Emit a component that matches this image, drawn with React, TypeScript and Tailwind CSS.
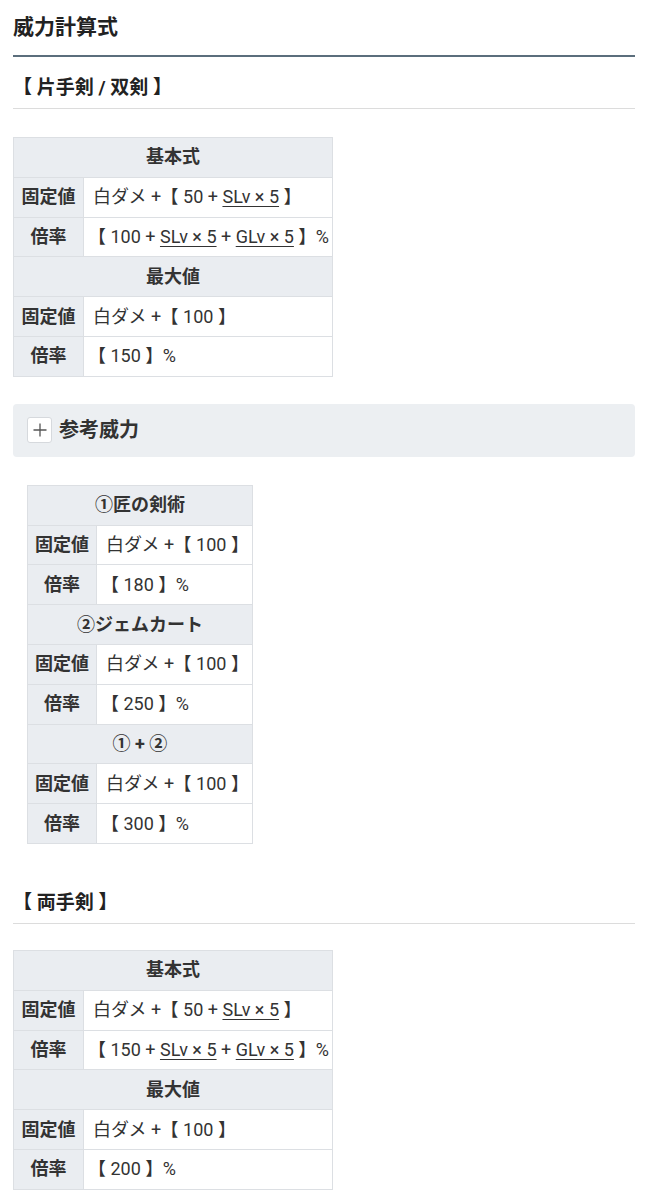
import React from "react";

const U = ({ children }: { children: React.ReactNode }) => (
  <span className="underline underline-offset-[3px] decoration-[1px]">{children}</span>
);
const L = () => <span className="ml-[4px]">【</span>;
const R = () => <span className="mr-[4px]">】</span>;

type Row =
  | { kind: "head"; text: React.ReactNode }
  | { kind: "row"; label: string; value: React.ReactNode };

function Table({ rows, width, labelW }: { rows: Row[]; width: string; labelW: string }) {
  return (
    <table className={`border-collapse ${width} text-[18px] text-[#333]`}>
      <tbody>
        {rows.map((r, i) =>
          r.kind === "head" ? (
            <tr key={i}>
              <td
                colSpan={2}
                className="h-[39.8px] border border-[#dcdfe3] bg-[#eaedf1] text-center font-bold p-0 leading-[24px]"
              >
                {r.text}
              </td>
            </tr>
          ) : (
            <tr key={i}>
              <td
                className={`h-[39.8px] ${labelW} border border-[#dcdfe3] bg-[#eaedf1] text-center font-bold p-0 leading-[24px]`}
              >
                {r.label}
              </td>
              <td className="h-[39.8px] border border-[#dcdfe3] bg-white pl-[9px] pr-0 py-0 whitespace-nowrap leading-[24px] [font-feature-settings:'halt']">
                {r.value}
              </td>
            </tr>
          )
        )}
      </tbody>
    </table>
  );
}

function SectionHead({ children, className = "" }: { children: React.ReactNode; className?: string }) {
  return (
    <div
      className={`border-b border-[#dcdcdc] pb-[7px] text-[19px] leading-[26px] font-bold text-[#222] ${className}`}
    >
      {children}
    </div>
  );
}

export default function App() {
  const font = { fontFamily: 'Roboto, "Noto Sans CJK JP", sans-serif' };
  const t1: Row[] = [
    { kind: "head", text: "基本式" },
    { kind: "row", label: "固定値", value: <>白ダメ + <L /> 50 + <U>SLv × 5</U> <R /></> },
    {
      kind: "row",
      label: "倍率",
      value: <><L /> 100 + <U>SLv × 5</U> + <U>GLv × 5</U> <R /> %</>,
    },
    { kind: "head", text: "最大値" },
    { kind: "row", label: "固定値", value: <>白ダメ + <L /> 100 <R /></> },
    { kind: "row", label: "倍率", value: <><L /> 150 <R /> %</> },
  ];
  const t2: Row[] = [
    { kind: "head", text: "①匠の剣術" },
    { kind: "row", label: "固定値", value: <>白ダメ + <L /> 100 <R /></> },
    { kind: "row", label: "倍率", value: <><L /> 180 <R /> %</> },
    { kind: "head", text: "②ジェムカート" },
    { kind: "row", label: "固定値", value: <>白ダメ + <L /> 100 <R /></> },
    { kind: "row", label: "倍率", value: <><L /> 250 <R /> %</> },
    { kind: "head", text: "① + ②" },
    { kind: "row", label: "固定値", value: <>白ダメ + <L /> 100 <R /></> },
    { kind: "row", label: "倍率", value: <><L /> 300 <R /> %</> },
  ];
  const t3: Row[] = [
    { kind: "head", text: "基本式" },
    { kind: "row", label: "固定値", value: <>白ダメ + <L /> 50 + <U>SLv × 5</U> <R /></> },
    {
      kind: "row",
      label: "倍率",
      value: <><L /> 150 + <U>SLv × 5</U> + <U>GLv × 5</U> <R /> %</>,
    },
    { kind: "head", text: "最大値" },
    { kind: "row", label: "固定値", value: <>白ダメ + <L /> 100 <R /></> },
    { kind: "row", label: "倍率", value: <><L /> 200 <R /> %</> },
  ];

  return (
    <div className="bg-white min-h-[1200px] pl-[13px] pr-[14px]" style={font}>
      <div className="pt-[12px] pb-[13px] border-b-2 border-[#5b6e7c] text-[21px] leading-[30px] font-bold text-[#222]">
        威力計算式
      </div>

      <SectionHead className="mt-[18px]">【 片手剣 / 双剣 】</SectionHead>

      <div className="mt-[28px]">
        <Table rows={t1} width="w-[320px]" labelW="w-[70px]" />
      </div>

      <div className="mt-[27px] h-[53px] rounded-[4px] bg-[#eceff2] pl-[14px] flex items-center gap-[7px]">
        <div className="w-[25px] h-[26px] rounded-[3px] bg-white border border-[#d6d9dd] flex items-center justify-center">
          <svg width="16" height="16" viewBox="0 0 16 16">
            <path d="M8 1.5V14.5M1.5 8H14.5" stroke="#555" strokeWidth="1.3" fill="none" />
          </svg>
        </div>
        <span className="text-[20px] leading-[26px] font-bold text-[#333]">参考威力</span>
      </div>

      <div className="mt-[28px] ml-[14px]">
        <Table rows={t2} width="w-[226px]" labelW="w-[69px]" />
      </div>

      <SectionHead className="mt-[46px]">【 両手剣 】</SectionHead>

      <div className="mt-[26px]">
        <Table rows={t3} width="w-[320px]" labelW="w-[70px]" />
      </div>
    </div>
  );
}
